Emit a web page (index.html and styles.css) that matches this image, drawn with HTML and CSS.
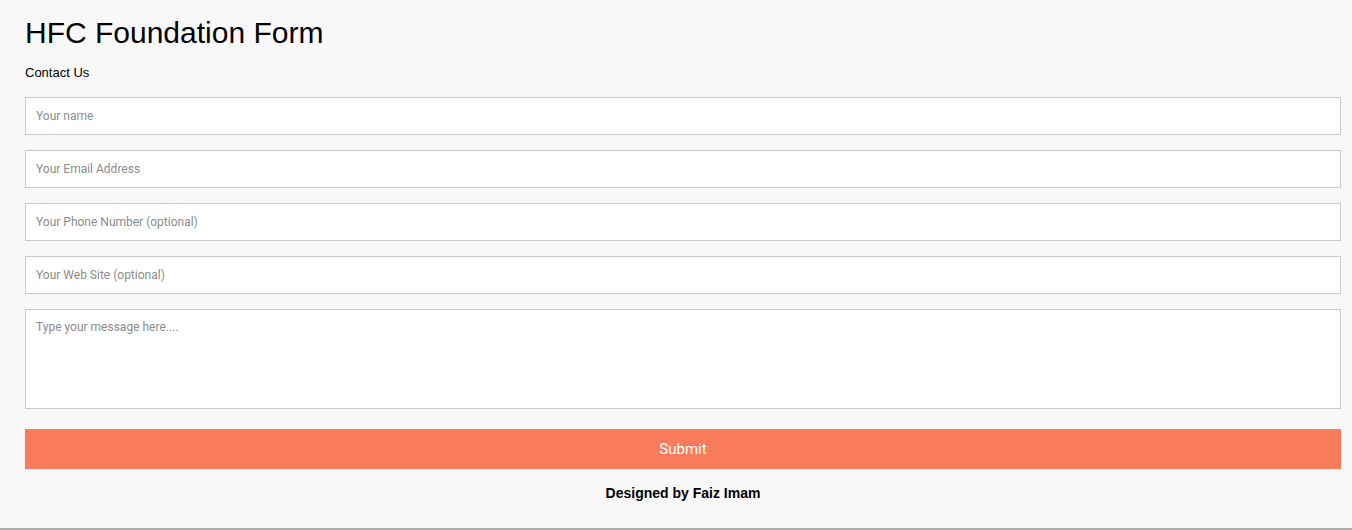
FILE: index.html
```html
<!DOCTYPE html>
<html lang="en">
<head>
<meta charset="utf-8">
<title>HFC Foundation Form</title>
<link rel="stylesheet" href="styles.css">
</head>
<body>
<div class="page">
  <h1 class="title">HFC Foundation Form</h1>
  <p class="subtitle">Contact Us</p>
  <form class="form">
    <input class="field" type="text" placeholder="Your name">
    <input class="field" type="email" placeholder="Your Email Address">
    <input class="field" type="text" placeholder="Your Phone Number (optional)">
    <input class="field" type="text" placeholder="Your Web Site (optional)">
    <textarea class="field message" placeholder="Type your message here...."></textarea>
    <button class="submit" type="button">Submit</button>
  </form>
  <p class="credit">Designed by Faiz Imam</p>
</div>
</body>
</html>
```
FILE: styles.css
```css
html, body {
  margin: 0;
  padding: 0;
  background: #f8f8f8;
}

.page {
  box-sizing: border-box;
  height: 530px;
  padding: 16px 11px 0 25px;
  border-bottom: 2px solid #adadad;
  font-family: "Liberation Sans", Arial, sans-serif;
  color: #000;
}

.title {
  margin: 0;
  font-size: 30px;
  font-weight: normal;
  line-height: 34px;
}

.subtitle {
  margin: 15px 0 0;
  font-size: 13px;
  line-height: 15px;
}

.form {
  margin-top: 17px;
  display: flex;
  flex-direction: column;
  gap: 15px;
}

.field {
  box-sizing: border-box;
  display: block;
  width: 100%;
  height: 38px;
  margin: 0;
  padding: 0 10px;
  border: 1px solid #cacaca;
  border-radius: 0;
  background: #fff;
  font-family: Roboto, "Liberation Sans", sans-serif;
  font-size: 12px;
  color: #333;
  outline: none;
}

.field::placeholder {
  color: #8c8c8c;
}

.message {
  height: 100px;
  padding: 10px;
  resize: none;
  line-height: 14px;
}

.submit {
  display: block;
  width: 100%;
  height: 40px;
  margin: 5px 0 0;
  border: 0;
  background: #f87c5c;
  color: #fff;
  font-family: Roboto, "Liberation Sans", sans-serif;
  font-size: 15px;
  cursor: pointer;
}

.credit {
  margin: 16px 0 0;
  text-align: center;
  font-size: 14px;
  font-weight: bold;
  line-height: 16px;
}
```
